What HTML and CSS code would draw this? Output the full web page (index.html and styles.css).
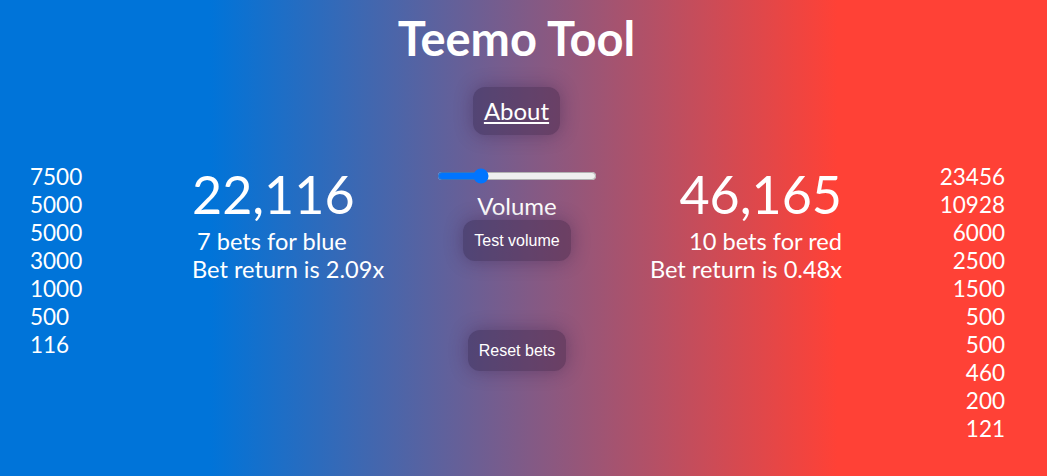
FILE: index.html
```html
<!DOCTYPE html>
<html lang="en">
<head>
<meta charset="utf-8">
<title>Teemo Tool</title>
<link rel="stylesheet" href="styles.css">
</head>
<body>
<div class="app">
  <h1 class="title">Teemo Tool</h1>
  <div class="about-row">
    <a class="btn about" href="#">About</a>
  </div>
  <div class="main">
    <ul class="bets bets-blue">
      <li>7500</li><li>5000</li><li>5000</li><li>3000</li><li>1000</li><li>500</li><li>116</li>
    </ul>
    <div class="team team-blue">
      <div class="total">22,116</div>
      <div class="line indent">7 bets for blue</div>
      <div class="line">Bet return is 2.09x</div>
    </div>
    <div class="center">
      <input class="volume-slider" type="range" min="0" max="100" value="25">
      <div class="volume-label">Volume</div>
      <button class="btn small">Test volume</button>
      <button class="btn small reset">Reset bets</button>
    </div>
    <div class="team team-red">
      <div class="total">46,165</div>
      <div class="line">10 bets for red</div>
      <div class="line">Bet return is 0.48x</div>
    </div>
    <ul class="bets bets-red">
      <li>23456</li><li>10928</li><li>6000</li><li>2500</li><li>1500</li><li>500</li><li>500</li><li>460</li><li>200</li><li>121</li>
    </ul>
  </div>
</div>
</body>
</html>
```

FILE: styles.css
```css
html, body {
  margin: 0;
  padding: 0;
  height: 100%;
}
body {
  background: linear-gradient(to right, #0074d9 20%, #ff4136 80%);
  color: #fff;
  font-family: Lato, "Open Sans", sans-serif;
  overflow: hidden;
}
.app {
  display: flex;
  flex-direction: column;
}
.title {
  margin: 8px 0 0;
  padding-right: 14px;
  font-size: 47px;
  line-height: 60px;
  font-weight: 700;
  text-align: center;
}
.about-row {
  display: flex;
  justify-content: center;
  padding-right: 14px;
  margin-top: 19px;
}
.btn {
  background: rgba(30, 15, 50, 0.32);
  box-shadow: 0 0 18px rgba(40, 20, 60, 0.35);
  border: none;
  border-radius: 12px;
  color: #fff;
}
.about {
  font-size: 24px;
  line-height: 28px;
  padding: 10px 11px;
  text-decoration: underline;
  text-underline-offset: 2px;
}
.main {
  display: grid;
  grid-template-columns: 192px 245px 160px 245px 163px;
  margin-top: 28px;
  align-items: start;
}
.bets {
  list-style: none;
  margin: 0;
  padding: 0;
  font-size: 22.5px;
  line-height: 28px;
}
.bets-blue {
  padding-left: 30px;
}
.bets-red {
  text-align: right;
}
.team {
  font-size: 23.6px;
  line-height: 28px;
}
.team-red {
  text-align: right;
}
.total {
  font-size: 52px;
  line-height: 62px;
  margin-bottom: 2px;
}
.indent {
  padding-left: 5px;
}
.center {
  display: flex;
  flex-direction: column;
  align-items: center;
}
.volume-slider {
  width: 160px;
  margin: 5px 0 0;
}
.volume-label {
  font-size: 24px;
  line-height: 28px;
  margin-top: 8px;
}
.small {
  font-family: "Liberation Sans", Arial, sans-serif;
  font-size: 16px;
  line-height: 19px;
  padding: 11px 11px;
}
.reset {
  margin-top: 69px;
}
```
